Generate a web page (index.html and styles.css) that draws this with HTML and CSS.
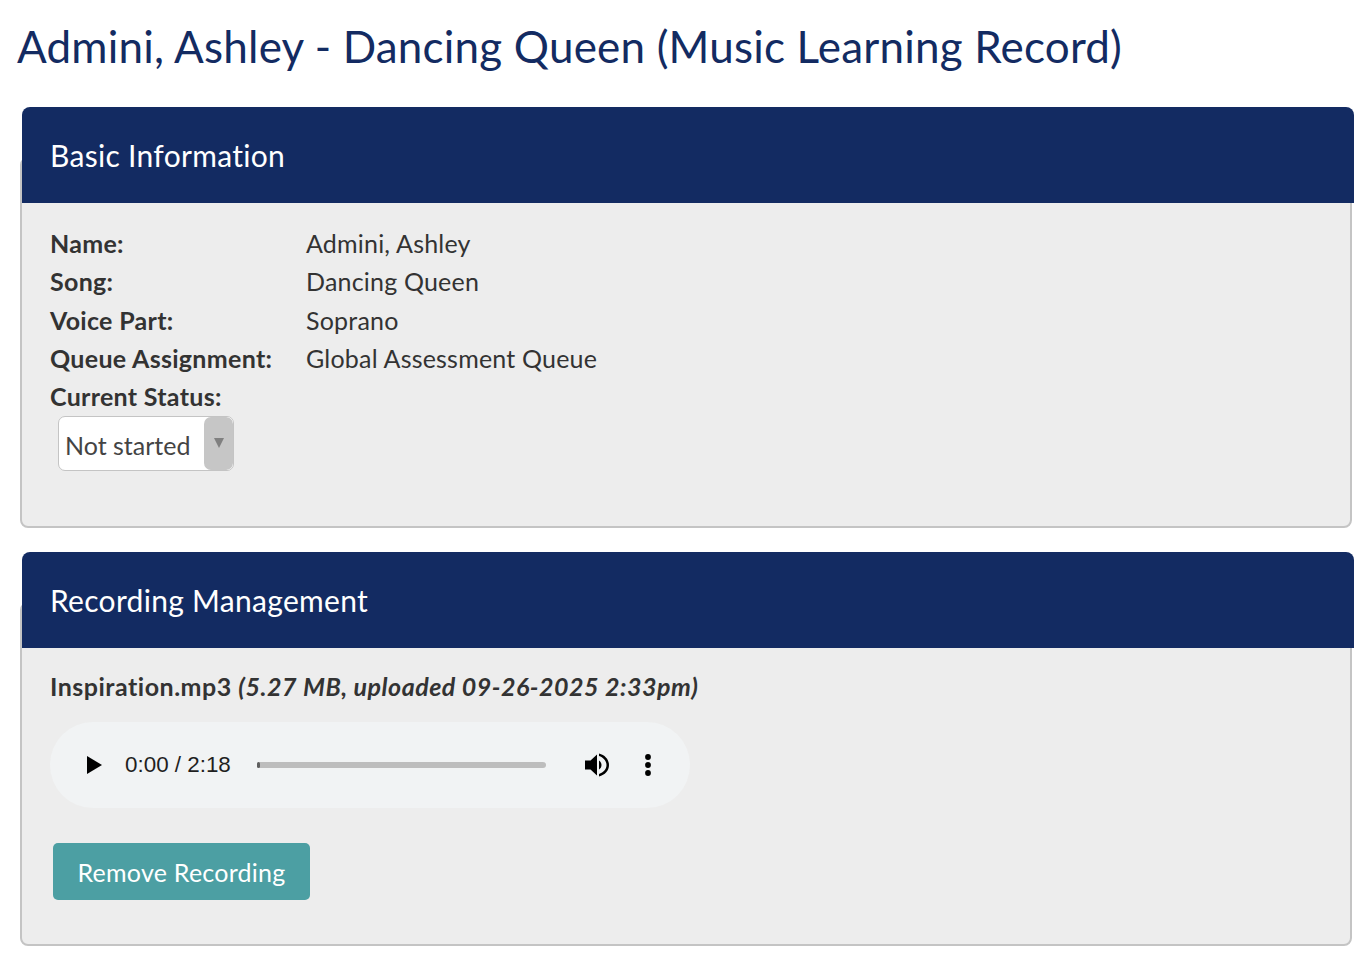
FILE: index.html
```html
<!DOCTYPE html>
<html lang="en">
<head>
<meta charset="utf-8">
<title>Admini, Ashley - Dancing Queen</title>
<link rel="stylesheet" href="styles.css">
</head>
<body>
<h1 class="page-title">Admini, Ashley - Dancing Queen (Music Learning Record)</h1>

<section class="panel panel-info">
  <h2 class="panel-head">Basic Information</h2>
  <div class="panel-body">
    <dl class="facts">
      <dt>Name:</dt><dd>Admini, Ashley</dd>
      <dt>Song:</dt><dd>Dancing Queen</dd>
      <dt>Voice Part:</dt><dd>Soprano</dd>
      <dt>Queue Assignment:</dt><dd>Global Assessment Queue</dd>
      <dt>Current Status:</dt><dd></dd>
    </dl>
    <div class="select">
      <span class="select-value">Not started</span>
      <span class="select-btn"><svg class="select-arrow" width="10" height="10" viewBox="0 0 10 10"><path d="M0 0H10L5 10Z"/></svg></span>
    </div>
  </div>
</section>

<section class="panel panel-rec">
  <h2 class="panel-head">Recording Management</h2>
  <div class="panel-body">
    <p class="file"><span class="file-name">Inspiration.mp3</span> <em>(5.27 MB, uploaded 09-26-2025 2:33pm)</em></p>
    <div class="player">
      <svg class="play" width="15" height="18" viewBox="0 0 15 18"><path d="M0 0L15 9L0 18Z"/></svg>
      <span class="time">0:00 / 2:18</span>
      <div class="track"><span class="thumb"></span></div>
      <svg class="volume" width="26" height="26" viewBox="0 0 26 26">
        <path d="M1 8.500H6.500L13 2.500V23.500L6.500 17.500H1Z"/>
        <path d="M15 8.500C16.800 9.800 17.500 11.300 17.500 13S16.800 16.200 15 17.500Z"/>
        <path d="M15 1.500C21 3 25 7.500 25 13S21 23 15 24.500V22C19.500 20.500 22.500 17 22.500 13S19.500 5.500 15 4Z"/>
      </svg>
      <svg class="more" width="6" height="24" viewBox="0 0 6 24"><circle cx="3" cy="4" r="2.900"/><circle cx="3" cy="12" r="2.900"/><circle cx="3" cy="20" r="2.900"/></svg>
    </div>
    <button class="btn" type="button">Remove Recording</button>
  </div>
</section>
</body>
</html>
```

FILE: styles.css
```css
* { box-sizing: border-box; }
html, body { margin: 0; padding: 0; }
body {
  width: 1372px;
  height: 960px;
  overflow: hidden;
  background: #fff;
  font-family: "Lato", "Noto Sans", sans-serif;
  color: #333;
  padding: 0 18px 0 20px;
}
.page-title {
  margin: 0 0 0 -3px;
  padding-top: 18px;
  font-size: 44px;
  line-height: 56px;
  font-weight: 400;
  letter-spacing: 0.190px;
  color: #132b62;
  white-space: nowrap;
}
.panel {
  background: #ededed;
  border: 2px solid #c4c4c4;
  border-radius: 8px;
  width: 1332px;
}
.panel-info { margin-top: 83px; height: 371px; }
.panel-rec { margin-top: 74px; height: 344px; }
.panel-head {
  margin: -52px -4px 0 0;
  height: 96px;
  background: #132b62;
  border-radius: 8px 8px 0 0;
  color: #fff;
  font-size: 30px;
  line-height: 96px;
  font-weight: 400;
  letter-spacing: 0.300px;
  padding-left: 28px;
}
.panel-body { padding: 0 28px; }
.facts {
  margin: 21px 0 0;
  display: grid;
  grid-template-columns: 256px 1fr;
  grid-auto-rows: 38.300px;
  font-size: 25px;
  line-height: 38px;
}
.facts dt { font-weight: 700; letter-spacing: 0.300px; }
.facts dd { margin: 0; letter-spacing: 0.200px; }
.select {
  margin: 1px 0 0 8px;
  width: 176px;
  height: 55px;
  display: flex;
  background: #fff;
  border: 1px solid #c4c4c4;
  border-radius: 7px;
  overflow: hidden;
}
.select-value {
  flex: 1;
  padding-left: 6px;
  font-size: 25px;
  line-height: 56px;
  color: #444;
}
.select-btn {
  width: 29px;
  background: #c6c6c6;
  border-radius: 7px;
  display: flex;
  justify-content: center;
  padding-top: 21px;
}
.select-arrow { fill: #808080; }
.file {
  margin: 20px 0 0;
  font-size: 25px;
  line-height: 36px;
  font-weight: 700;
  letter-spacing: 0.500px;
}
.player {
  margin-top: 18px;
  width: 640px;
  height: 86px;
  border-radius: 43px;
  background: #f1f3f4;
  display: flex;
  align-items: center;
  padding-left: 37px;
  color: #1f1f1f;
}
.play { flex: none; }
.time {
  margin-left: 23px;
  width: 132px;
  font-family: "Liberation Sans", Arial, sans-serif;
  font-size: 22.400px;
}
.track {
  width: 289px;
  height: 6px;
  border-radius: 3px;
  background: #bdbdbd;
}
.thumb {
  display: block;
  width: 3px;
  height: 6px;
  border-radius: 2px;
  background: #5f5f5f;
}
.volume { margin-left: 38px; flex: none; }
.more { margin-left: 35px; flex: none; }
.btn {
  display: block;
  margin: 35px 0 0 3px;
  width: 257px;
  height: 57px;
  border: 0;
  border-radius: 5px;
  background: #4c9fa3;
  color: #fff;
  font-family: inherit;
  font-size: 25px;
  letter-spacing: 0.250px;
  padding: 0;
}
```
